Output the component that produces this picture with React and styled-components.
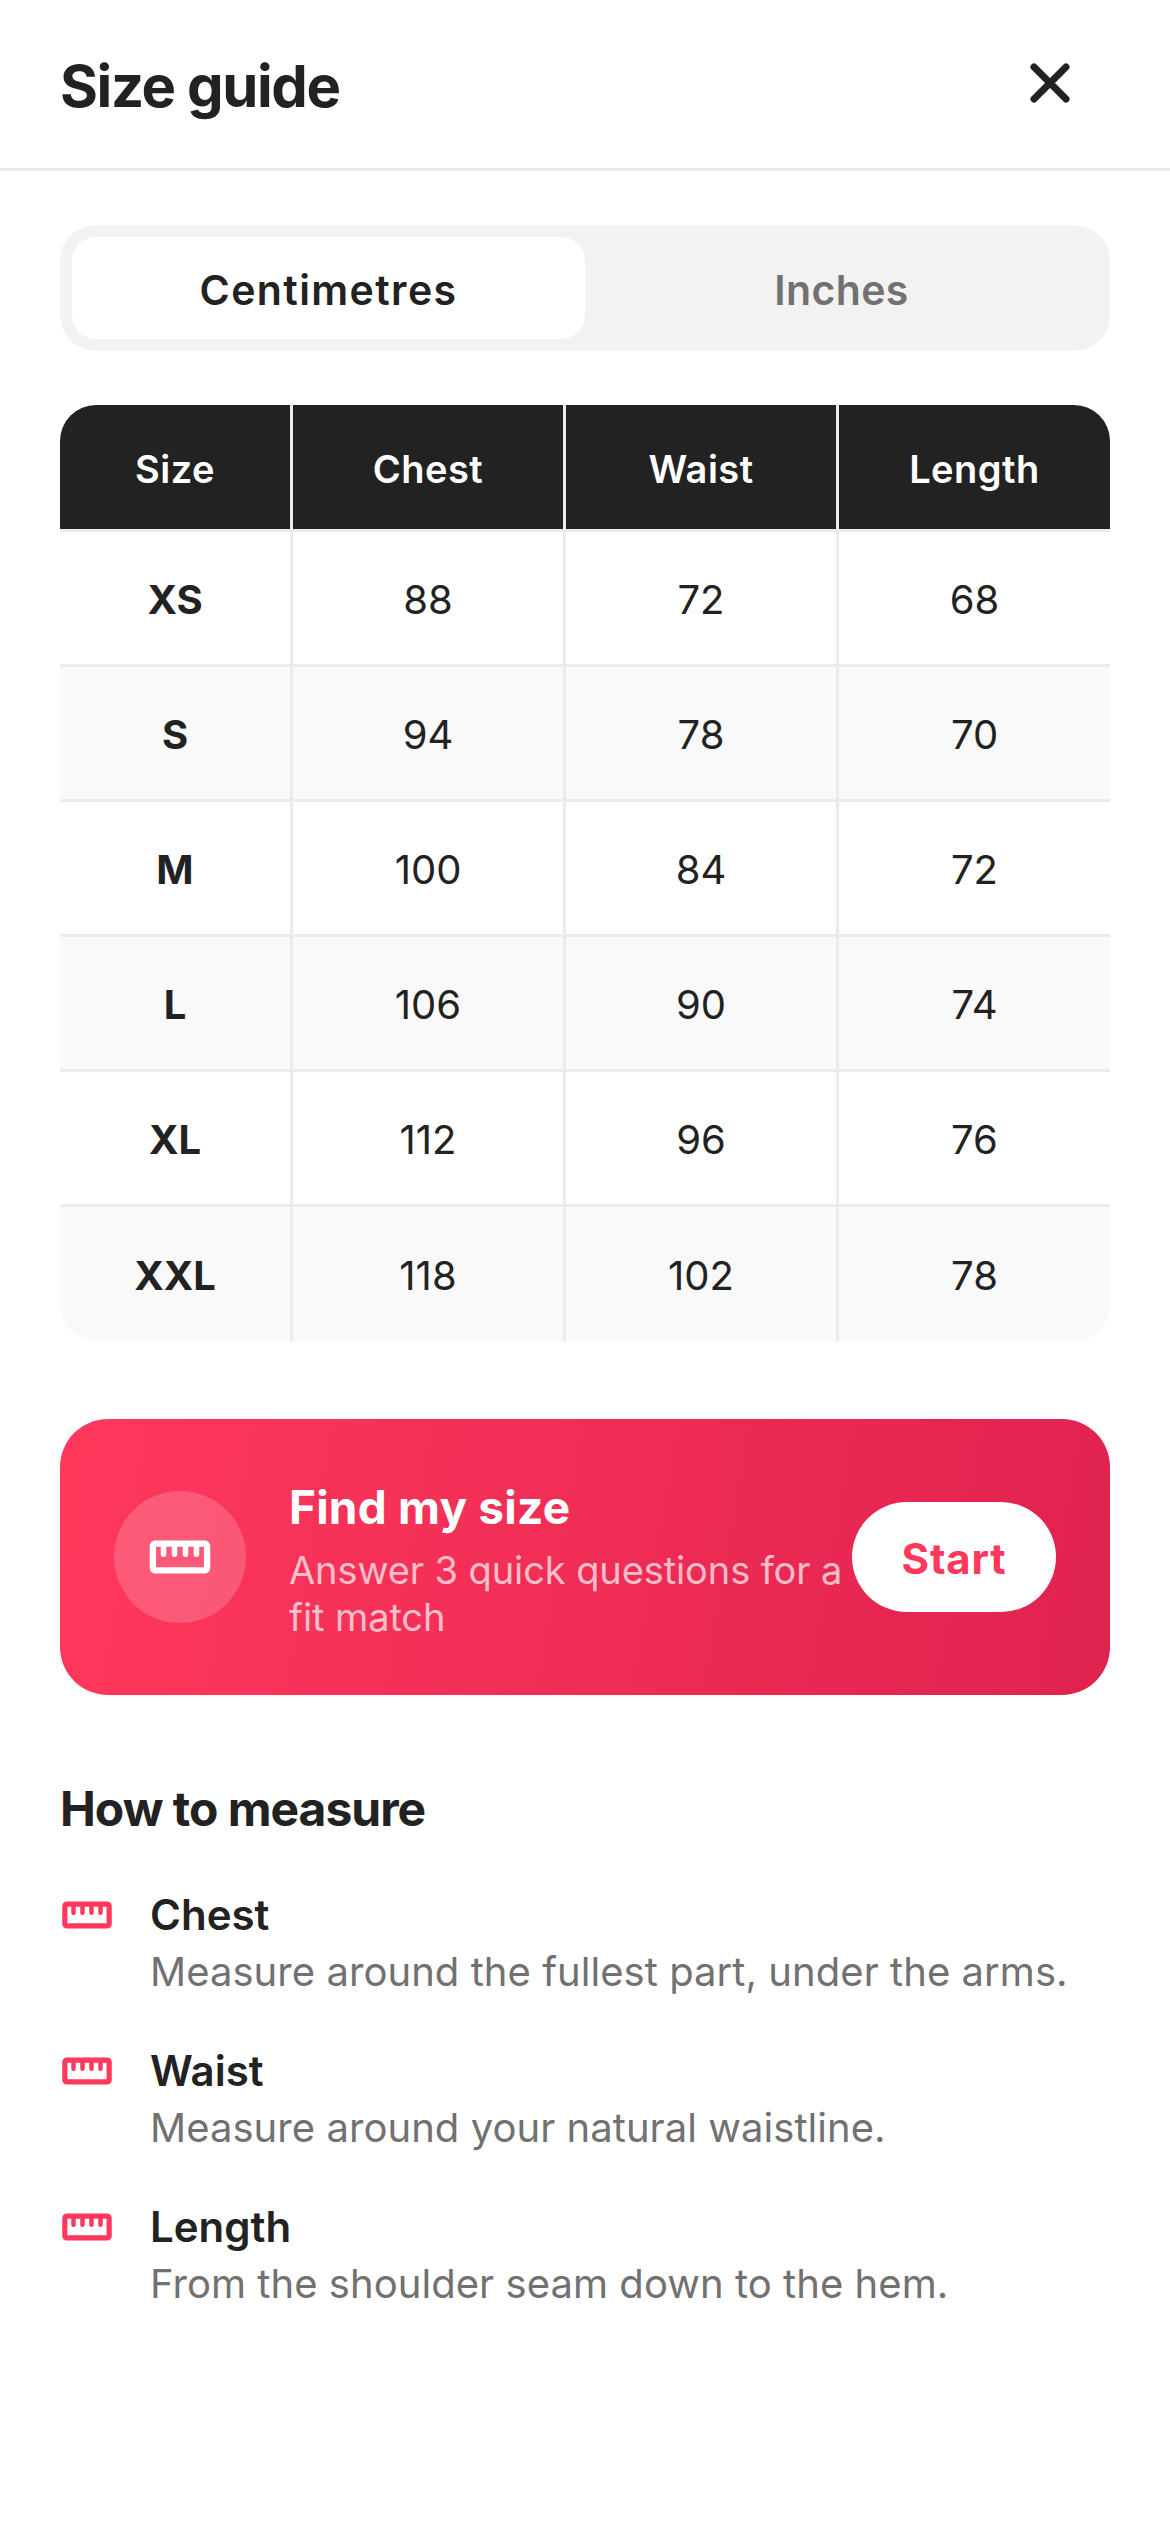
import React from 'react';
import styled, { createGlobalStyle } from 'styled-components';

const GlobalStyle = createGlobalStyle`
  html, body {
    margin: 0;
    padding: 0;
    background: #fff;
  }
  body {
    font-family: Inter, "Noto Sans", sans-serif;
    color: #222;
  }
`;

const Page = styled.div`
  width: 1170px;
  height: 2532px;
  background: #fff;
  overflow: hidden;
`;

const Header = styled.header`
  height: 168px;
  padding: 0 60px;
  display: flex;
  align-items: center;
  justify-content: space-between;
  border-bottom: 3px solid #ebebeb;
`;

const Title = styled.h1`
  margin: 4px 0 0;
  font-size: 58px;
  font-weight: 700;
  letter-spacing: -1.4px;
  color: #222;
`;

const CloseButton = styled.button`
  width: 72px;
  height: 72px;
  margin: 0 24px 2px 0;
  padding: 0;
  border: 0;
  background: none;
  display: flex;
  align-items: center;
  justify-content: center;
  color: #222;
`;

const Body = styled.main`
  padding: 54px 60px 0;
`;

const Tabs = styled.div`
  height: 126px;
  box-sizing: border-box;
  padding: 12px;
  background: #f2f2f2;
  border-radius: 36px;
  display: grid;
  grid-template-columns: 1fr 1fr;
`;

const Tab = styled.div`
  display: flex;
  align-items: center;
  justify-content: center;
  padding-top: 3px;
  border-radius: 24px;
  font-size: 41px;
  font-weight: 600;
  letter-spacing: ${p => (p.$active ? '1.4px' : '0.4px')};
  background: ${p => (p.$active ? '#fff' : 'transparent')};
  color: ${p => (p.$active ? '#222' : '#717171')};
`;

const Table = styled.div`
  margin-top: 54px;
  border-radius: 36px;
  overflow: hidden;
  display: grid;
  grid-template-columns: 233px 273px 273px 1fr;
`;

const HeadCell = styled.div`
  height: 127px;
  display: flex;
  align-items: center;
  justify-content: center;
  padding-top: 3px;
  background: #222;
  color: #fff;
  font-size: 38px;
  font-weight: 600;
  letter-spacing: 0.5px;
  box-sizing: border-box;
  border-right: ${p => (p.$last ? '0' : '3px solid #ebebeb')};
  border-bottom: 3px solid #ebebeb;
`;

const Cell = styled.div`
  height: ${p => (p.$bottom ? '134px' : '135px')};
  display: flex;
  align-items: center;
  justify-content: center;
  padding-top: 2px;
  box-sizing: border-box;
  font-size: 40px;
  font-weight: ${p => (p.$bold ? 700 : 400)};
  background: ${p => (p.$alt ? '#f9f9f9' : '#fff')};
  border-right: ${p => (p.$last ? '0' : '3px solid #ebebeb')};
  border-bottom: ${p => (p.$bottom ? '0' : '3px solid #ebebeb')};
`;

const Card = styled.section`
  margin-top: 78px;
  height: 276px;
  box-sizing: border-box;
  padding: 0 54px;
  border-radius: 48px;
  background: linear-gradient(100deg, #ff385c 0%, #e0224f 100%);
  display: flex;
  align-items: center;
`;

const CardIcon = styled.div`
  width: 132px;
  height: 132px;
  flex: none;
  border-radius: 50%;
  background: rgba(255, 255, 255, 0.18);
  display: flex;
  align-items: center;
  justify-content: center;
  color: #fff;
`;

const CardText = styled.div`
  flex: 1;
  min-width: 0;
  margin-left: 43px;
  padding-top: 4px;
`;

const CardTitle = styled.div`
  font-size: 46px;
  font-weight: 700;
  line-height: 60px;
  letter-spacing: 0.2px;
  color: #fff;
`;

const CardSub = styled.div`
  margin-top: 10px;
  font-size: 38px;
  line-height: 47px;
  letter-spacing: -0.1px;
  color: rgba(255, 255, 255, 0.7);
`;

const StartButton = styled.div`
  flex: none;
  width: 204px;
  height: 110px;
  box-sizing: border-box;
  padding-top: 3px;
  border-radius: 55px;
  background: #fff;
  color: #ff385c;
  font-size: 42px;
  font-weight: 700;
  letter-spacing: 0.8px;
  display: flex;
  align-items: center;
  justify-content: center;
`;

const SectionTitle = styled.h2`
  margin: 78px 0 0;
  font-size: 48px;
  font-weight: 700;
  line-height: 72px;
  letter-spacing: -1px;
  color: #222;
`;

const Steps = styled.div`
  margin-top: 43px;
  display: flex;
  flex-direction: column;
  gap: 42px;
`;

const Step = styled.div`
  display: flex;
  gap: 36px;
`;

const StepIcon = styled.div`
  width: 54px;
  height: 54px;
  flex: none;
  color: #ff385c;
  display: flex;
  align-items: center;
  justify-content: center;
`;

const StepName = styled.div`
  font-size: 42px;
  font-weight: 600;
  line-height: 54px;
  color: #222;
`;

const StepText = styled.div`
  font-size: 40px;
  line-height: 60px;
  letter-spacing: 0.05px;
  color: #717171;
`;

const Ruler = ({ size }) => (
  <svg width={size} height={size} viewBox="0 0 24 24" fill="currentColor">
    <path d="M21 6H3c-1.100 0-2 .9-2 2v8c0 1.100.9 2 2 2h18c1.100 0 2-.9 2-2V8c0-1.100-.9-2-2-2zm-.3 9.700H3.300V8.300H5V11a1 1 0 0 0 2 0V8.300h2V11a1 1 0 0 0 2 0V8.300h2V11a1 1 0 0 0 2 0V8.300h2V11a1 1 0 0 0 2 0V8.300h1.700z" />
  </svg>
);

const columns = ['Size', 'Chest', 'Waist', 'Length'];

const rows = [
  ['XS', 88, 72, 68],
  ['S', 94, 78, 70],
  ['M', 100, 84, 72],
  ['L', 106, 90, 74],
  ['XL', 112, 96, 76],
  ['XXL', 118, 102, 78],
];

const steps = [
  ['Chest', 'Measure around the fullest part, under the arms.'],
  ['Waist', 'Measure around your natural waistline.'],
  ['Length', 'From the shoulder seam down to the hem.'],
];

export default function App() {
  return (
    <Page>
      <GlobalStyle />
      <Header>
        <Title>Size guide</Title>
        <CloseButton aria-label="Close">
          <svg width="72" height="72" viewBox="0 0 72 72" fill="none" stroke="currentColor" strokeWidth="7" strokeLinecap="round">
            <path d="M20 20l32 32M52 20L20 52" />
          </svg>
        </CloseButton>
      </Header>
      <Body>
        <Tabs>
          <Tab $active>Centimetres</Tab>
          <Tab>Inches</Tab>
        </Tabs>
        <Table>
          {columns.map((c, i) => (
            <HeadCell key={c} $last={i === 3}>{c}</HeadCell>
          ))}
          {rows.map((row, r) =>
            row.map((v, i) => (
              <Cell key={`${r}-${i}`} $bold={i === 0} $alt={r % 2 === 1} $last={i === 3} $bottom={r === 5}>
                {v}
              </Cell>
            ))
          )}
        </Table>
        <Card>
          <CardIcon><Ruler size={66} /></CardIcon>
          <CardText>
            <CardTitle>Find my size</CardTitle>
            <CardSub>Answer 3 quick questions for a fit match</CardSub>
          </CardText>
          <StartButton>Start</StartButton>
        </Card>
        <SectionTitle>How to measure</SectionTitle>
        <Steps>
          {steps.map(([name, text]) => (
            <Step key={name}>
              <StepIcon><Ruler size={54} /></StepIcon>
              <div>
                <StepName>{name}</StepName>
                <StepText>{text}</StepText>
              </div>
            </Step>
          ))}
        </Steps>
      </Body>
    </Page>
  );
}
